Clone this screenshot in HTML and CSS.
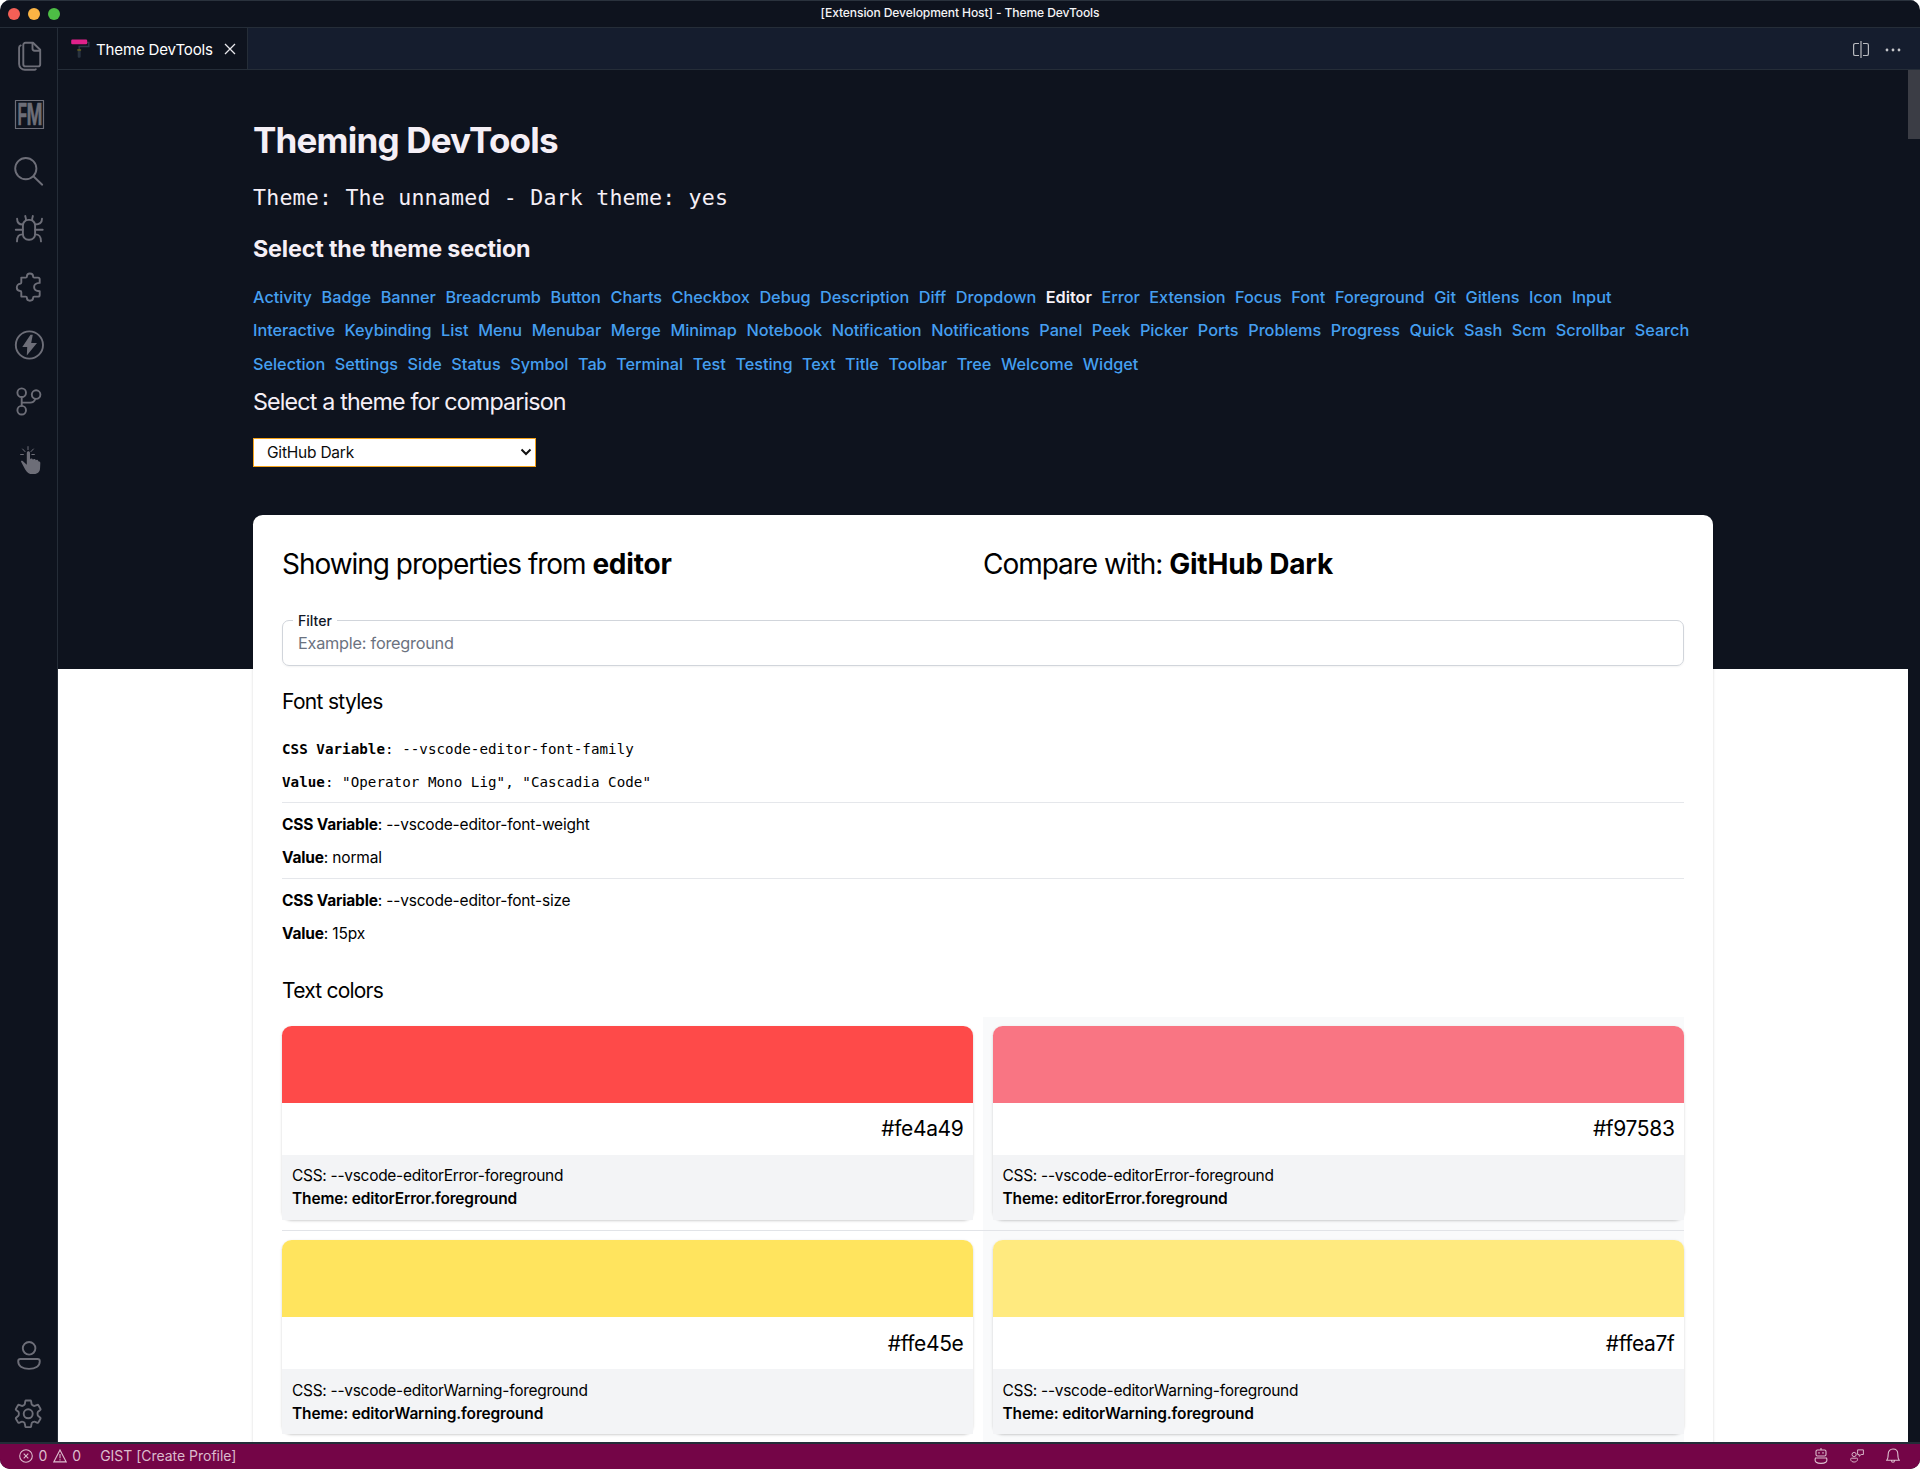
FILE: index.html
```html
<!DOCTYPE html>
<html lang="en">
<head>
<meta charset="utf-8">
<title>Theme DevTools</title>
<link rel="stylesheet" href="styles.css">
</head>
<body>
<div class="window">
  <header class="titlebar">
    <div class="lights"><i class="light red"></i><i class="light amber"></i><i class="light green"></i></div>
    <span class="window-title">[Extension Development Host] - Theme DevTools</span>
  </header>
  <div class="workbench">
    <aside class="activitybar">
      <div class="group">
        <div class="act"><svg viewBox="0 0 29 29" class="ico"><path d="M10.500 .8h7.500l7.200 7v14.400a2.200 2.200 0 0 1-2.200 2.200H10.500a2.200 2.200 0 0 1-2.200-2.200V3A2.200 2.200 0 0 1 10.500 .8z"/><path d="M17.500 1v5.500a2.200 2.200 0 0 0 2.200 2.200h5"/><path d="M5.700 3.400c-1.100.5-1.600 1.200-1.600 2.400v16.200a5.800 5.800 0 0 0 5.800 5.800h9.600c.6 0 1-.2 1.300-.6"/></svg></div>
        <div class="act"><svg viewBox="0 0 29 29" class="ico fm"><rect x=".5" y=".5" width="28" height="28"/><text transform="translate(2.400 25.300) scale(.5 1)">F</text><text transform="translate(11.400 25.300) scale(.62 1)">M</text></svg></div>
        <div class="act"><svg viewBox="0 0 29 29" class="ico"><circle cx="10.800" cy="11.600" r="10.600"/><path d="M18.400 19.300l8.800 8.400"/></svg></div>
        <div class="act"><svg viewBox="0 0 29 29" class="ico"><rect x="7.900" y="4.900" width="12.200" height="19.800" rx="5.500"/><path d="M10.900 5.200V4c0-1.200-.6-1.700-.6-3M17.200 5.200V4c0-1.200.6-1.700.6-3M7.900 9.500C4 9.500 2.100 8 2.100 3.800M20.100 9.500c4.500 0 6.900-1.500 6.900-5.700M.8 14.700h7M20.100 14.700h7.600M7.900 19.400c-4 0-5.900 1.500-5.900 7M20.100 19.400c4 0 5.900 1.500 5.900 7"/></svg></div>
        <div class="act"><svg viewBox="0 0 29 29" class="ico"><path transform="translate(-.5 -.6)" d="M6.800 5.200h4.400c.7 0 1.200-.5 1.200-1.200 0-1.800 1.200-2.900 3-2.900s3.200 1.100 3.200 2.900c0 .7.500 1.200 1.200 1.200h3.700c1 0 1.700.7 1.700 1.700v3.600c-3 .2-5.600 1.200-5.600 4s2.600 4.200 5.600 4.400v3.600c0 1-.7 1.700-1.700 1.700h-3.700c-.7 0-1.200.5-1.200 1.200 0 1.700-1.400 2.900-3.200 2.900s-3-1.200-3-2.900c0-.7-.5-1.200-1.200-1.200H6.800v-4.400c0-.7-.5-1.200-1.200-1.200-2 0-3.300-1.500-3.300-3.400s1.300-3.800 3.300-3.800c.7 0 1.200-.5 1.200-1.200z"/></svg></div>
        <div class="act"><svg viewBox="0 0 29 29" class="ico"><circle cx="14.400" cy="15" r="13.600"/><path class="solid" d="M15.500 4.800L7.300 17h4.900l-.4 8.600 10.200-12.700h-5.800l1.600-8.100z"/></svg></div>
        <div class="act"><svg viewBox="0 0 29 29" class="ico"><circle cx="6.700" cy="4.700" r="4.300"/><circle cx="21.100" cy="6.600" r="4.300"/><circle cx="6.700" cy="22.200" r="4.300"/><path d="M6.700 9.200v8.600M20.400 11c-1 2.600-2.600 3.600-5.200 3.600H6.700"/></svg></div>
        <div class="act"><svg viewBox="0 0 29 29" class="ico"><path class="solid" d="M11.800 8.200c0-2.600 3.200-2.600 3.200 0v6.300c.4-1.600 2.700-1.300 2.900.2.500-1.200 2.700-.9 2.900.6.500-1.100 2.500-.7 2.500.9l.9.300c1.100.3 1.200 1 1.100 2.200l-.3 5.200c-.3 3.700-3.300 5.200-7.500 5.200-3.600 0-5.400-1.600-7.300-4.700L6.200 17c-.6-1.300.5-1.700 1.500-1.100l4.100 3.900z"/><path class="thin" d="M13 1.600v3M7.600 4l2.400 2.600M18.400 4L16 6.600M5.600 9.500h2.800M16.800 9.500h2.600"/></svg></div>
      </div>
      <div class="group">
        <div class="act"><svg viewBox="0 0 29 29" class="ico"><circle cx="14.100" cy="7.300" r="6.300"/><path d="M5.500 18h17c1.600 0 2.300.9 2.300 2.300 0 4.900-4.700 7.600-10.800 7.600S3.200 25.200 3.200 20.300c0-1.400.7-2.300 2.300-2.300z"/></svg></div>
        <div class="act"><svg viewBox="0 0 29 29" class="ico"><circle cx="13.200" cy="14.800" r="4.500"/><path d="M11 1.500h4.400c.4 0 .6.300.7.700l.5 3c.1.700 2.300 2 3 1.700l2.800-1.100c.4-.1.800 0 1 .4l2.100 3.700c.2.400.1.800-.2 1L23 12.800c-.6.500-.6 3.500 0 4l2.300 1.900c.3.300.4.700.2 1l-2.100 3.700c-.2.400-.6.500-1 .4l-2.800-1.100c-.7-.3-2.900 1-3 1.700l-.5 3c-.1.400-.3.700-.7.700H11c-.4 0-.6-.3-.7-.7l-.5-3c-.1-.7-2.300-2-3-1.700L4 23.800c-.4.1-.8 0-1-.4L.9 19.700c-.2-.3-.1-.7.2-1l2.300-1.900c.6-.5.6-3.500 0-4l-2.300-1.900c-.3-.2-.4-.6-.2-1L3 6.200c.2-.4.6-.5 1-.4l2.800 1.100c.7.3 2.900-1 3-1.700l.5-3c.1-.4.3-.7.7-.7z"/></svg></div>
      </div>
    </aside>
    <section class="editor">
      <div class="tabs">
        <div class="tab">
          <svg viewBox="0 0 19 19" class="roller"><path d="M15.500 3.500h2.300v4H8.200v3.500" fill="none" stroke="#2c3846" stroke-width="1.500"/><rect x="6.700" y="10.700" width="3" height="8" rx="1" fill="#28323f"/><rect x="6.300" y="10.200" width="3.800" height="1.500" fill="#67611c"/><rect x=".2" y=".6" width="16" height="4.600" rx="1.200" fill="#e0218a"/></svg>
          <span class="tab-name">Theme DevTools</span>
          <svg viewBox="0 0 12 12" class="close"><path d="M1 1l10 10M11 1L1 11"/></svg>
        </div>
        <div class="tab-actions">
          <svg viewBox="0 0 16 17" class="split"><path d="M6 2.500H2.200a1.600 1.600 0 0 0-1.600 1.600v8.800a1.600 1.600 0 0 0 1.600 1.600H6M10 2.500h3.800a1.600 1.600 0 0 1 1.600 1.600v8.800a1.600 1.600 0 0 1-1.600 1.600H10M8 0v17"/></svg>
          <svg viewBox="0 0 16 4" class="more"><circle cx="2" cy="2" r="1.400"/><circle cx="8" cy="2" r="1.400"/><circle cx="14" cy="2" r="1.400"/></svg>
        </div>
      </div>
      <div class="view">
        <main class="page">
          <div class="hero">
            <h1>Theming DevTools</h1>
            <p class="current mono">Theme: The unnamed - Dark theme: yes</p>
            <h2>Select the theme section</h2>
            <nav class="sections"><a>Activity</a><a>Badge</a><a>Banner</a><a>Breadcrumb</a><a>Button</a><a>Charts</a><a>Checkbox</a><a>Debug</a><a>Description</a><a>Diff</a><a>Dropdown</a><a class="on">Editor</a><a>Error</a><a>Extension</a><a>Focus</a><a>Font</a><a>Foreground</a><a>Git</a><a>Gitlens</a><a>Icon</a><a>Input</a><a>Interactive</a><a>Keybinding</a><a>List</a><a>Menu</a><a>Menubar</a><a>Merge</a><a>Minimap</a><a>Notebook</a><a>Notification</a><a>Notifications</a><a>Panel</a><a>Peek</a><a>Picker</a><a>Ports</a><a>Problems</a><a>Progress</a><a>Quick</a><a>Sash</a><a>Scm</a><a>Scrollbar</a><a>Search</a><a>Selection</a><a>Settings</a><a>Side</a><a>Status</a><a>Symbol</a><a>Tab</a><a>Terminal</a><a>Test</a><a>Testing</a><a>Text</a><a>Title</a><a>Toolbar</a><a>Tree</a><a>Welcome</a><a>Widget</a></nav>
            <h3>Select a theme for comparison</h3>
            <div class="select"><span>GitHub Dark</span><svg viewBox="0 0 12 8"><path d="M1.500 1.500L6 6l4.500-4.500"/></svg></div>
          </div>
          <div class="card">
            <div class="card-head"><h2>Showing properties from <b>editor</b></h2><h2>Compare with: <b>GitHub Dark</b></h2></div>
            <div class="filter"><label>Filter</label><span>Example: foreground</span></div>
            <h3 class="sub">Font styles</h3>
            <ul class="fonts">
              <li class="mono"><p><b>CSS Variable</b>: --vscode-editor-font-family</p><p><b>Value</b>: "Operator Mono Lig", "Cascadia Code"</p></li>
              <li><p><b>CSS Variable</b>: --vscode-editor-font-weight</p><p><b>Value</b>: normal</p></li>
              <li><p><b>CSS Variable</b>: --vscode-editor-font-size</p><p><b>Value</b>: 15px</p></li>
            </ul>
            <h3 class="sub text-colors">Text colors</h3>
            <div class="row">
              <div class="cell"><article class="color"><div class="swatch c1"></div><p class="hex">#fe4a49</p><footer><p>CSS: --vscode-editorError-foreground</p><p class="strong">Theme: editorError.foreground</p></footer></article></div>
              <div class="cell alt"><article class="color"><div class="swatch c2"></div><p class="hex">#f97583</p><footer><p>CSS: --vscode-editorError-foreground</p><p class="strong">Theme: editorError.foreground</p></footer></article></div>
            </div>
            <div class="row">
              <div class="cell"><article class="color"><div class="swatch c3"></div><p class="hex">#ffe45e</p><footer><p>CSS: --vscode-editorWarning-foreground</p><p class="strong">Theme: editorWarning.foreground</p></footer></article></div>
              <div class="cell alt"><article class="color"><div class="swatch c4"></div><p class="hex">#ffea7f</p><footer><p>CSS: --vscode-editorWarning-foreground</p><p class="strong">Theme: editorWarning.foreground</p></footer></article></div>
            </div>
          </div>
        </main>
        <div class="scrollbar"><div class="thumb"></div></div>
      </div>
    </section>
  </div>
  <footer class="statusbar">
    <div class="problems">
      <svg viewBox="0 0 14 14" class="s14"><circle cx="7" cy="7" r="6.300"/><path d="M4.700 4.700l4.600 4.600M9.300 4.700L4.700 9.300"/></svg><span>0</span>
      <svg viewBox="0 0 14 14" class="s14"><path d="M7 .9l6.200 12H.8zM7 5v4.300M7 10.300v1.200"/></svg><span>0</span>
    </div>
    <span class="gist">GIST [Create Profile]</span>
    <div class="status-right">
      <svg viewBox="0 0 14 16"><path d="M7 0v2M3.400 2h7.200a1.400 1.400 0 0 1 1.400 1.400v3.200A1.400 1.400 0 0 1 10.600 8H3.400A1.400 1.400 0 0 1 2 6.600V3.400A1.400 1.400 0 0 1 3.400 2zM5 4v1.700M9 4v1.700M1.500 10h11c1.500 4-1.500 5.400-5.500 5.400S0 14 1.500 10z"/></svg>
      <svg viewBox="0 0 16 16"><circle cx="4.700" cy="6.300" r="2.400"/><path d="M1.800 10.500h5.800c1 0 1.200.7 1 1.600-.4 2-2 2.800-3.900 2.800S1.200 14.100.8 12.100c-.2-.9 0-1.600 1-1.600zM8.700 1h6.600v5.300h-2.600l-2.200 2v-2H8.700z"/></svg>
      <svg viewBox="0 0 14 16"><path d="M.7 12.300c1.200-1.300 1.500-2.400 1.500-6.300C2.200 3 4.200 1 7 1s4.800 2 4.800 5c0 3.900.3 5 1.500 6.300zM5.500 12.500c0 2.400 3 2.400 3 0"/></svg>
    </div>
  </footer>
</div>
</body>
</html>
```
FILE: styles.css
```css
* { box-sizing: border-box; margin: 0; padding: 0; }
html, body { height: 100%; }
body { background: #fff; font-family: Inter, "Liberation Sans", sans-serif; font-size: 15.500px; overflow: hidden; }
ul { list-style: none; }
svg { display: block; flex: none; }
.window { display: flex; flex-direction: column; height: 1469px; border-radius: 10px; overflow: hidden; background: #0e131e; }

.titlebar { height: 28px; flex: none; display: grid; grid-template-columns: 1fr auto 1fr; align-items: center; border-top: 1px solid #2a323d; border-bottom: 1px solid #252d38; padding-left: 8px; }
.lights { display: flex; gap: 8px; }
.light { width: 12px; height: 12px; border-radius: 50%; }
.red { background: #f35f56; }
.amber { background: #fbb444; }
.green { background: #4dbd45; }
.window-title { color: #f4f4f6; font-size: 12.100px; letter-spacing: -.12px; font-weight: 500; line-height: 18px; margin-top: -3px; margin-left: -8px; white-space: nowrap; }

.workbench { flex: 1; display: flex; min-height: 0; }
.activitybar { width: 58px; flex: none; border-right: 1px solid #252d38; display: flex; flex-direction: column; justify-content: space-between; }
.act { height: 57.600px; display: flex; align-items: center; padding-left: 15px; }
.ico { width: 29px; height: 29px; fill: none; stroke: #6d6e78; stroke-width: 1.900; stroke-linecap: round; stroke-linejoin: round; overflow: visible; }
.ico .solid { fill: #6d6e78; stroke: none; }
.ico .thin { stroke-width: 1; }
.fm { stroke-width: 1.200; }
.fm text { font: bold 31px "Liberation Sans", Arial, sans-serif; fill: #6d6e78; stroke: #6d6e78; stroke-width: .6; }

.editor { flex: 1; min-width: 0; display: flex; flex-direction: column; }
.tabs { height: 42px; flex: none; display: flex; justify-content: space-between; background: #151d2e; border-bottom: 1px solid #252d38; }
.tab { width: 190px; background: #0e131e; border-right: 1px solid #252d38; display: flex; align-items: center; padding-left: 13px; }
.roller { width: 19px; height: 19px; }
.tab-name { color: #fff; font-size: 15.100px; letter-spacing: -.19px; margin-left: 6px; padding-top: 2px; white-space: nowrap; }
.close { width: 12px; height: 12px; margin: 1px 0 0 11px; fill: none; stroke: #e8e8ec; stroke-width: 1.300; }
.tab-actions { display: flex; align-items: center; gap: 16px; padding: 2px 19px 0 0; }
.split { width: 16px; height: 17px; fill: none; stroke: #b9bbc0; stroke-width: 1.200; }
.more { width: 16px; height: 4px; fill: #c4c5ca; }

.view { flex: 1; display: flex; min-height: 0; overflow: hidden; }
.page { flex: 1; padding: 48px 195px 0; overflow: hidden; background: linear-gradient(#0e131e 599px, #fff 599px); }
.scrollbar { width: 12px; }
.thumb { height: 69px; background: #3b3d45; }

.hero { color: #f5eff6; display: flex; flex-direction: column; align-items: flex-start; }
h1 { font-size: 35px; letter-spacing: -.8px; line-height: 44px; font-weight: 700; }
.mono { font-family: "DejaVu Sans Mono", "Liberation Mono", monospace; }
.current { font-size: 21.600px; letter-spacing: .2px; line-height: 36px; margin-top: 18px; }
.hero h2 { font-size: 23.300px; letter-spacing: -.17px; line-height: 32px; font-weight: 700; margin-top: 17px; }
.sections { display: flex; flex-wrap: wrap; column-gap: 9.600px; margin-top: 16px; padding-right: 18px; font-size: 16.300px; letter-spacing: -.03px; line-height: 33.300px; font-weight: 500; color: #459ff0; }
.sections .on { color: #f5eff6; font-weight: 600; }
.hero h3 { font-size: 23.300px; letter-spacing: -.86px; line-height: 32px; font-weight: 400; margin-top: 4.900px; }
.select { width: 283px; height: 29px; margin-top: 20px; background: #fff; color: #0b0b0b; border: 1px solid #f5a31a; display: flex; align-items: center; justify-content: space-between; padding: 0 3px 0 13px; letter-spacing: -.22px; }
.select svg { width: 12px; height: 8px; fill: none; stroke: #111; stroke-width: 2; }

.card { margin-top: 48px; background: #fff; color: #000; border-radius: 9.600px; padding: 29px 29px 0; height: 1200px; box-shadow: 0 1px 3px rgba(0,0,0,.16); }
.card-head { display: grid; grid-template-columns: 1fr 1fr; }
.card-head h2 { font-size: 28px; letter-spacing: -1.030px; line-height: 40px; font-weight: 400; }
.card-head b { letter-spacing: -.2px; }
b { font-weight: 700; }
.filter { position: relative; margin-top: 36px; height: 46px; border: 1px solid #d1d5db; border-radius: 7px; padding: 0 15px; line-height: 45px; font-size: 16.300px; letter-spacing: -.24px; color: #6b7280; box-shadow: 0 1px 2px rgba(0,0,0,.05); }
.filter label { position: absolute; left: 10px; top: -10px; padding: 0 5px; background: #fff; color: #111827; font-size: 14.100px; letter-spacing: 0; line-height: 20px; font-weight: 500; }
.sub { font-size: 21px; letter-spacing: -.68px; line-height: 30px; font-weight: 400; margin-top: 21px; }
.fonts { margin-top: 10px; letter-spacing: -.18px; }
.fonts li { padding: 5px 0 4px; border-bottom: 1px solid #e5e7eb; line-height: 33px; }
.fonts li:last-child { border-bottom: 0; }
.fonts .mono { font-size: 14.200px; letter-spacing: .04px; padding: 6px 0 3px; }
.text-colors { margin-top: 22px; margin-bottom: 11px; letter-spacing: -.78px; }

.row { display: grid; grid-template-columns: 1fr 1fr; }
.row + .row { border-top: 1px solid #e2e4e8; }
.cell { padding: 9px 10px 10px 0; }
.alt { background: #f9fafb; padding: 9px 0 10px 10px; }
.color { background: #fff; border-radius: 9.600px; box-shadow: 0 1px 3px rgba(0,0,0,.14), 0 1px 2px rgba(0,0,0,.06); }
.swatch { height: 77px; border-radius: 9.600px 9.600px 0 0; }
.c1 { background: #fe4a49; }
.c2 { background: #f97583; }
.c3 { background: #ffe45e; }
.c4 { background: #ffea7f; }
.hex { height: 52px; line-height: 52px; font-size: 21px; letter-spacing: -.36px; text-align: right; padding-right: 9.500px; }
.row + .row .hex { line-height: 54px; }
.color footer { height: 65px; background: #f3f4f6; padding: 9px 10px; line-height: 23px; letter-spacing: -.29px; }
.alt .color footer { padding-left: 9.500px; }
.row + .row .color footer { padding-top: 10px; }
.color .strong { font-weight: 600; letter-spacing: -.16px; }

.statusbar { height: 27px; flex: none; background: #740547; border-top: 2px solid #232d38; display: flex; align-items: center; color: #dcbccd; font-size: 14px; letter-spacing: -.02px; padding: 0 20px 1px 19px; }
.statusbar span { margin-top: -1px; }
.statusbar svg { fill: none; stroke: #dcbccd; stroke-width: 1.100; }
.problems { display: flex; align-items: center; gap: 5.500px; }
.s14 { width: 14px; height: 14px; }
.gist { margin-left: 19px; white-space: nowrap; }
.status-right { margin-left: auto; display: flex; align-items: center; gap: 22px; }
.status-right svg { width: 14px; height: 16px; }
```
